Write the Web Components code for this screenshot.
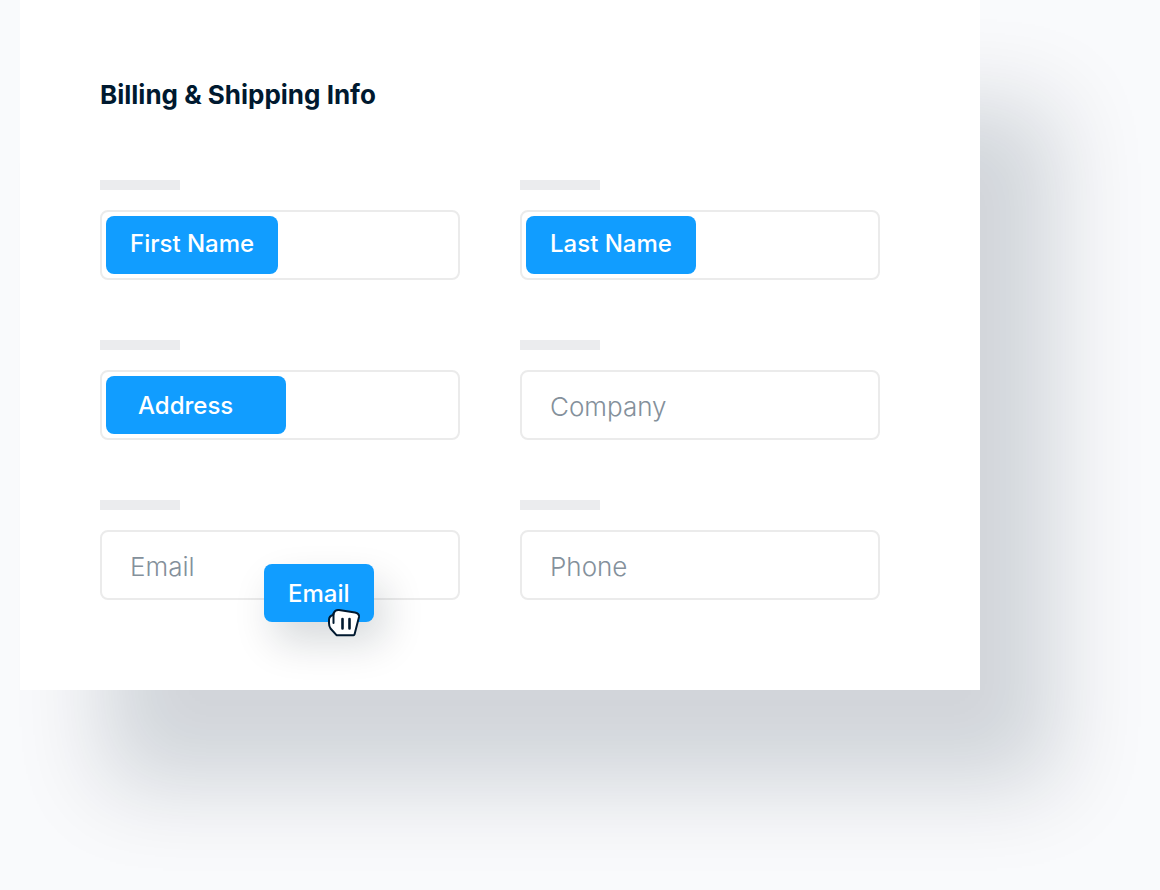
<!DOCTYPE html>
<html lang="en">
<head>
<meta charset="utf-8">
<meta name="viewport" content="width=device-width, initial-scale=1">
<title>Billing &amp; Shipping Info</title>
<style>
  body {
    margin: 0;
    min-height: 100vh;
    background: #f9fafc;
    font-family: Inter, "Liberation Sans", sans-serif;
    color: #00192f;
    overflow-x: hidden;
  }
</style>
</head>
<body>
<form-card>
  <span slot="title">Billing &amp; Shipping Info</span>
  <form-field name="First name"><tag-chip class="w172">First Name</tag-chip></form-field>
  <form-field name="Last name"><tag-chip class="w170">Last Name</tag-chip></form-field>
  <form-field name="Address"><tag-chip class="indent">Address</tag-chip></form-field>
  <form-field name="Company" placeholder="Company"></form-field>
  <form-field name="Email" placeholder="Email"><tag-chip slot="overlay" dragging>Email</tag-chip></form-field>
  <form-field name="Phone" placeholder="Phone"></form-field>
</form-card>

<template id="form-card">
  <style>
    :host {
      display: block;
      box-sizing: border-box;
      margin: 0 180px 0 20px;
      padding: 80px 100px 90px 80px;
      background: #fff;
      box-shadow: 80px 100px 84px -4px rgba(0, 23, 43, .16);
    }
    h1 { margin: 0 0 70px; font-size: 26px; line-height: 30px; font-weight: 700; }
    form { display: grid; grid-template-columns: 1fr 1fr; gap: 60px; }
  </style>
  <h1><slot name="title"></slot></h1>
  <form><slot></slot></form>
</template>

<template id="form-field">
  <style>
    :host { display: flex; flex-direction: column; gap: 20px; position: relative; min-width: 0; }
    label { display: block; width: 80px; height: 10px; background: #ebecee; }
    .box {
      display: flex;
      box-sizing: border-box;
      height: 70px;
      padding: 4px;
      border: 2px solid #ebebeb;
      border-radius: 8px;
      background: #fff;
    }
    input {
      flex: 1;
      min-width: 0;
      box-sizing: border-box;
      margin: 0;
      padding: 4px 24px 0;
      border: 0;
      outline: 0;
      background: none;
      font: 300 26px/32px Inter, "Liberation Sans", sans-serif;
      color: #00192f;
    }
    input::placeholder { color: #84909b; opacity: 1; }
  </style>
  <label for="control"></label>
  <div class="box"><slot></slot><input id="control" type="text"></div>
  <slot name="overlay"></slot>
</template>

<template id="tag-chip">
  <style>
    :host { display: block; flex: none; height: 58px; width: 110px; }
    :host(.w172) { width: 172px; }
    :host(.w170) { width: 170px; }
    :host(.indent) { width: 180px; }
    button {
      display: block;
      box-sizing: border-box;
      width: 100%;
      height: 58px;
      margin: 0;
      padding: 2px 0 0 24px;
      border: 0;
      border-radius: 8px;
      background: #119dff;
      color: #fff;
      font: 500 24px/28px Inter, "Liberation Sans", sans-serif;
      text-align: left;
      white-space: nowrap;
      cursor: grab;
    }
    :host(.w172) button, :host(.w170) button { padding-top: 0; padding-bottom: 2px; }
    :host(.indent) button { padding-left: 32px; }
    svg { display: none; }
    :host([dragging]) { position: absolute; left: 164px; top: 64px; }
    :host([dragging]) button { box-shadow: 10px 20px 40px rgba(0, 25, 40, .16); cursor: grabbing; }
    :host([dragging]) svg { display: block; position: absolute; left: 62px; top: 44px; pointer-events: none; }
  </style>
  <button type="button"><slot></slot></button>
  <svg width="36" height="30" viewBox="0 0 36 30" aria-hidden="true">
    <path d="M8 4.5Q9.500 1.500 13 2L29 4.500Q33.500 5.500 33 9L28.500 26.500Q28.300 27.200 27.500 27.200H10.500L4.500 20.500Q3 18.500 3 15V12Q3 8 7.200 7Z" fill="#fff" stroke="#00192f" stroke-width="2" stroke-linejoin="round"/>
    <path d="M7.500 5.500V15" fill="none" stroke="#00192f" stroke-width="2" stroke-linecap="round"/>
    <path d="M16.500 11V20.500M23.500 11V20.500" fill="none" stroke="#00192f" stroke-width="2.600" stroke-linecap="round"/>
  </svg>
</template>

<script>
  class TemplateElement extends HTMLElement {
    constructor() {
      super();
      const template = document.getElementById(this.localName);
      this.attachShadow({ mode: "open" }).append(template.content.cloneNode(true));
    }
  }

  class FormCard extends TemplateElement {}
  class TagChip extends TemplateElement {}

  class FormField extends TemplateElement {
    connectedCallback() {
      const name = this.getAttribute("name");
      const input = this.shadowRoot.querySelector("input");
      input.name = name;
      input.setAttribute("aria-label", name);
      input.placeholder = this.getAttribute("placeholder") || "";
    }
  }

  customElements.define("form-card", FormCard);
  customElements.define("form-field", FormField);
  customElements.define("tag-chip", TagChip);
</script>
</body>
</html>
